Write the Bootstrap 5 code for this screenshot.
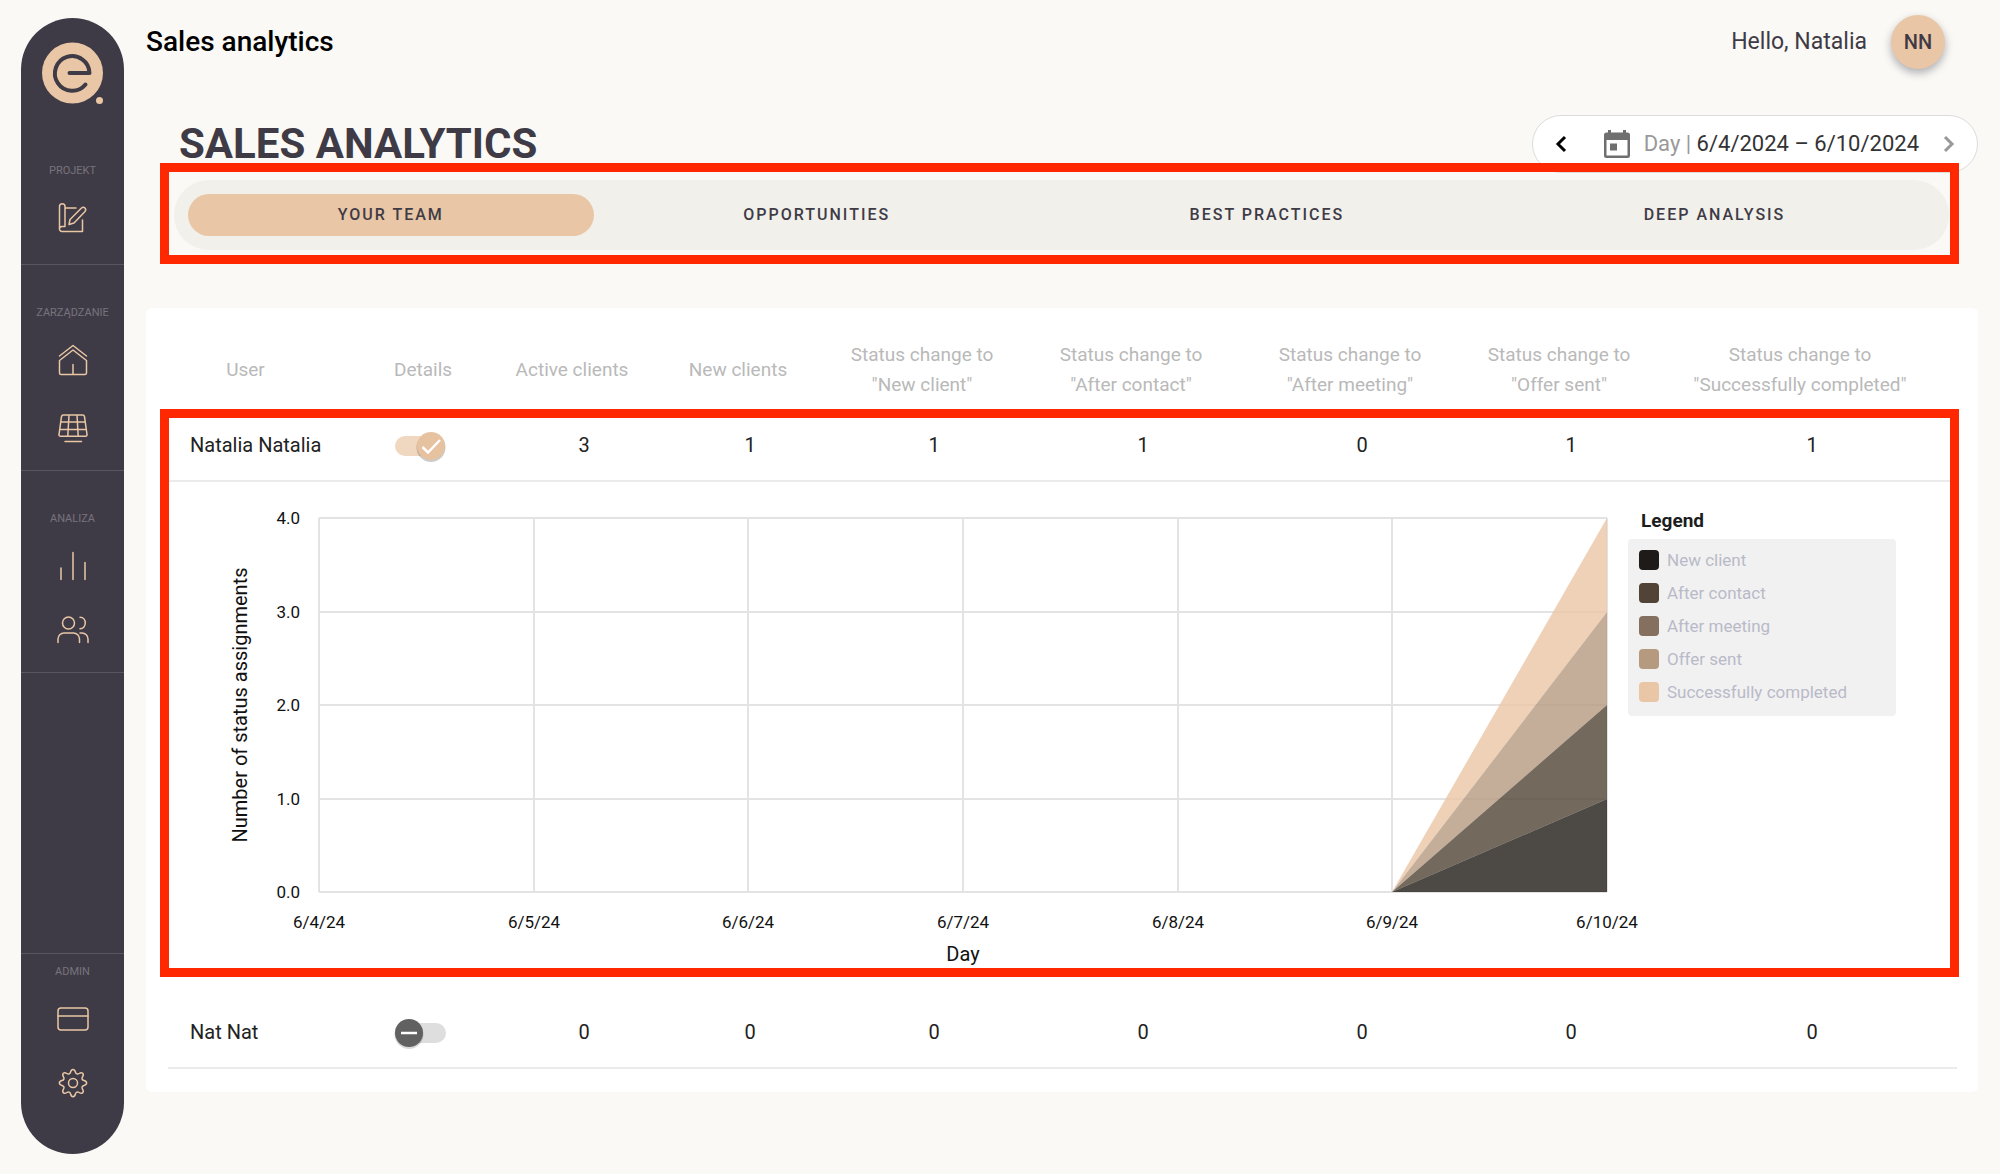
<!DOCTYPE html>
<html lang="en">
<head>
<meta charset="utf-8">
<meta name="viewport" content="width=device-width, initial-scale=1">
<title>Sales analytics</title>
<link href="https://cdn.jsdelivr.net/npm/bootstrap@5.3.0/dist/css/bootstrap.min.css" rel="stylesheet">
<style>
  :root { --ink: #3f3b46; --sand: #e9c6a5; --paper: #faf9f5; --line: #e4e4e4; --alert: #ff2800; }
  body { font-family: Roboto, "Noto Sans", sans-serif; background: var(--paper); color: #222; font-size: 19px; line-height: 30px; }

  .side-rail { width: 103px; margin: 18px 0 20px 21px; background: var(--ink); border-radius: 52px; padding-top: 22px; overflow: hidden; }
  .side-logo { margin-bottom: 53px; }
  .rail-group { padding-bottom: 24px; border-bottom: 1px solid #5a5661; }
  .side-logo + .rail-group { padding-bottom: 28px; }
  .rail-group + .rail-group { padding-top: 40px; }
  .rail-group.rail-admin { margin-top: auto; padding: 10px 0 53px; border-top: 1px solid #5a5661; border-bottom: 0; }
  .rail-label { font-size: 11px; line-height: 16px; color: #77737d; margin-bottom: 21px; }
  .rail-link { height: 36px; color: var(--sand); }
  .rail-link + .rail-link { margin-top: 28px; }
  .rail-manage .rail-link + .rail-link { margin-top: 32px; }
  .rail-link svg { fill: none; stroke: currentColor; stroke-width: 1.5; stroke-linecap: round; stroke-linejoin: round; }

  .page-main { padding: 15px 22px 0; min-width: 0; }
  .top-title { font-size: 28px; line-height: 54px; font-weight: 500; color: #000; }
  .top-bar { margin-bottom: 46px; padding-right: 33px; }
  .hello-text { font-size: 23px; color: var(--ink); }
  .avatar-btn { width: 54px; height: 54px; background: var(--sand); color: var(--ink); font-size: 20px; font-weight: 500; box-shadow: 0 4px 8px rgba(60,60,80,.4); }

  .page-title { font-size: 42px; line-height: 58px; font-weight: 700; color: var(--ink); padding-left: 33px; }
  .date-pill { height: 58px; background: #fff; border: 1px solid #dcdcdc; font-size: 22px; color: #333; padding: 0 18px; }
  .date-pill .range-kind { color: #999; }
  .date-pill .btn { width: 20px; }
  .date-pill .btn:last-child { margin-left: 20px; }
  .cal-icon { margin: 0 14px 0 33px; }

  .marked { position: relative; }
  .marked::after { content: ""; position: absolute; border: 9px solid var(--alert); pointer-events: none; z-index: 2; }
  .marked-tabs { margin: 7px 29px 58px 28px; }
  .marked-tabs::after { inset: -17px -10px -14px -14px; }
  .marked-table::after { top: 78px; bottom: 92px; left: -8px; right: -2px; }

  .team-tabs { background: #f1f0eb; border-radius: 35px; padding: 14px; }
  .team-tabs .nav-link { height: 42px; border-radius: 21px; padding: 0; font-size: 16px; line-height: 42px; font-weight: 500; letter-spacing: 2px; color: var(--ink); white-space: nowrap; }
  .team-tabs .nav-link.active { background: var(--sand); color: var(--ink); }

  .data-card { background: #fff; border-radius: 6px; padding: 23px 21px 23px 22px; }
  .team-table { table-layout: fixed; width: 100%; text-align: center; }
  .team-table thead th { height: 78px; font-weight: 400; color: #b9b9b9; padding: 0 24px 0 0; white-space: nowrap; vertical-align: middle; line-height: 30px; }
  .team-table thead th.plain-head { padding: 0; }
  .team-table tbody td { padding: 0; }
  .team-table .user-row td { height: 72px; border-bottom: 2px solid #ebebeb; vertical-align: middle; font-size: 20px; }
  .team-table .user-row td.user-name { text-align: left; padding-left: 22px; white-space: nowrap; }
  .c-user { width: 179px; } .c-det { width: 152px; } .c-act { width: 170px; } .c-new { width: 162px; }
  .c-s1 { width: 206px; } .c-s2 { width: 212px; } .c-s3 { width: 226px; } .c-s4 { width: 192px; } .c-s5 { width: 290px; }

  .detail-switch { appearance: none; display: block; width: 56px; height: 34px; margin: 2px auto 0 45px; background: no-repeat center/56px 34px; cursor: pointer;
    background-image: url("data:image/svg+xml,%3Csvg xmlns='http://www.w3.org/2000/svg' viewBox='0 0 56 34'%3E%3Crect x='4' y='7' width='50' height='20' rx='10' fill='%23dedede'/%3E%3Ccircle cx='17' cy='18.500' r='14.500' fill='%23000' opacity='.15'/%3E%3Ccircle cx='17' cy='17' r='14' fill='%23616161'/%3E%3Cpath d='M9 17h16' stroke='%23fff' stroke-width='2.500'/%3E%3C/svg%3E"); }
  .detail-switch:checked {
    background-image: url("data:image/svg+xml,%3Csvg xmlns='http://www.w3.org/2000/svg' viewBox='0 0 56 34'%3E%3Crect x='3' y='7' width='50' height='20' rx='10' fill='%23f0d7bf'/%3E%3Ccircle cx='39' cy='18.500' r='14.500' fill='%23000' opacity='.2'/%3E%3Ccircle cx='39' cy='17' r='14' fill='%23e6c2a0'/%3E%3Cpath d='M30.500 18l5.500 5.500L48 11' fill='none' stroke='%23fff' stroke-width='2.500'/%3E%3C/svg%3E"); }

  .chart-wrap { height: 514px; padding-right: 61px; }
  .chart-svg { min-width: 0; overflow: visible; }
  .chart-svg text { fill: #111; font-size: 17px; }
  .chart-svg .axis-name { font-size: 20px; }
  .grid-lines { stroke: #e3e3e3; stroke-width: 2; fill: none; }
  .legend-col { width: 268px; padding-top: 24px; text-align: left; }
  .legend-title { font-size: 19px; font-weight: 700; line-height: 30px; padding-left: 13px; margin-bottom: 3px; color: #1d1d1d; }
  .legend-list { background: #f1f1f1; border-radius: 4px; padding: 4px 11px 8px; }
  .legend-list li { height: 33px; gap: 8px; font-size: 17px; color: #b9bac8; }
  .key-box { width: 20px; height: 20px; border-radius: 4px; }
  .k1 { background: #1e1b18; } .k2 { background: #514335; } .k3 { background: #857060; } .k4 { background: #b59a80; } .k5 { background: #e9c6a5; }
</style>
</head>
<body>
<div class="d-flex min-vh-100">
  <nav class="side-rail d-flex flex-column flex-shrink-0 text-center" aria-label="Main">
    <a href="#" class="side-logo d-block" aria-label="Home">
      <svg class="d-block mx-auto" width="70" height="70" viewBox="0 0 70 70">
        <circle cx="34.500" cy="33" r="30.500" fill="#e9c6a5"/><circle cx="61.500" cy="60.500" r="3.500" fill="#e9c6a5"/>
        <path d="M31.500 33H51.500A17.300 17.300 0 1 0 47.500 44.500" fill="none" stroke="#3f3b46" stroke-width="4" stroke-linecap="round" stroke-linejoin="round"/>
      </svg>
    </a>
    <div class="rail-group">
      <div class="rail-label">PROJEKT</div>
      <a href="#" class="rail-link d-flex align-items-center justify-content-center" aria-label="Project">
        <svg width="32" height="32" viewBox="0 0 32 32"><path d="M8 24.500V4.500a2.750 2.750 0 0 0-5.500 0v22A2.500 2.500 0 0 0 5 29.500h20.500V18M8 24.500H5a2.500 2.500 0 0 0-2.500 2.500M8 6H19M12 22.500l1-5L24.500 6c2.500-2 5.500 1 3.500 3.500L17 21z"/></svg>
      </a>
    </div>
    <div class="rail-group rail-manage">
      <div class="rail-label">ZARZĄDZANIE</div>
      <a href="#" class="rail-link d-flex align-items-center justify-content-center" aria-label="House">
        <svg width="32" height="34" viewBox="0 0 32 34"><path d="M2.500 13 16 2.500 29.500 13M2.500 17.500 16 7l13.500 10.500V30a1.500 1.500 0 0 1-1.500 1.500H4A1.500 1.500 0 0 1 2.500 30zM16 21.500v10"/></svg>
      </a>
      <a href="#" class="rail-link d-flex align-items-center justify-content-center" aria-label="Solar panels">
        <svg width="32" height="32" viewBox="0 0 32 32"><path d="M6.500 3h19a2 2 0 0 1 2 1.700L30 22.500a1.500 1.500 0 0 1-1.500 1.800h-25A1.500 1.500 0 0 1 2 22.500L4.500 4.700a2 2 0 0 1 2-1.700zM4 10h24M3 17.500h26M12 3l-1.200 21M20 3l1.200 21M8 29.500h16.500"/></svg>
      </a>
    </div>
    <div class="rail-group">
      <div class="rail-label">ANALIZA</div>
      <a href="#" class="rail-link d-flex align-items-center justify-content-center" aria-label="Statistics">
        <svg width="32" height="32" viewBox="0 0 32 32"><path d="M4 18v11.500M16 2.500v27M28 12.500v17"/></svg>
      </a>
      <a href="#" class="rail-link d-flex align-items-center justify-content-center" aria-label="Users">
        <svg width="34" height="32" viewBox="0 0 34 32"><circle cx="12.500" cy="9" r="6"/><path d="M24 3.200c7 0 7 11.500 0 11.500M2 28.500v-3.500a6 6 0 0 1 6-6h9.500a6 6 0 0 1 6 6v3.500M24 19h2a6 6 0 0 1 6 6v3.500"/></svg>
      </a>
    </div>
    <div class="rail-group rail-admin">
      <div class="rail-label">ADMIN</div>
      <a href="#" class="rail-link d-flex align-items-center justify-content-center" aria-label="Billing">
        <svg width="34" height="26" viewBox="0 0 34 26"><rect x="2" y="2" width="30" height="22" rx="3"/><path d="M2 10h30"/></svg>
      </a>
      <a href="#" class="rail-link d-flex align-items-center justify-content-center" aria-label="Settings">
        <svg width="32" height="32" viewBox="0 0 32 32"><circle cx="16" cy="16" r="4.500"/><path d="M13.600 5C14.500 1.500 17.500 1.500 18.400 5c.5 2 2.200 2.500 3.700 1.500 3-2 5.400.4 3.400 3.400-1 1.500-.5 3.200 1.500 3.700 3.500.9 3.500 3.900 0 4.800-2 .5-2.500 2.200-1.500 3.700 2 3-.4 5.400-3.400 3.400-1.500-1-3.200-.5-3.700 1.500-.9 3.500-3.900 3.500-4.800 0-.5-2-2.200-2.500-3.700-1.500-3 2-5.400-.4-3.400-3.400 1-1.500.5-3.200-1.500-3.700-3.500-.9-3.500-3.900 0-4.800 2-.5 2.500-2.200 1.500-3.700-2-3 .4-5.400 3.400-3.400 1.500 1 3.200.5 3.700-1.500z"/></svg>
      </a>
    </div>
  </nav>

  <main class="page-main flex-grow-1">
    <header class="top-bar d-flex align-items-center justify-content-between">
      <div class="top-title">Sales analytics</div>
      <div class="d-flex align-items-center gap-4">
        <span class="hello-text">Hello, Natalia</span>
        <button type="button" class="avatar-btn btn rounded-circle p-0 border-0">NN</button>
      </div>
    </header>

    <div class="d-flex align-items-center justify-content-between">
      <h1 class="page-title mb-0">SALES ANALYTICS</h1>
      <div class="date-pill d-flex align-items-center rounded-pill">
        <button type="button" class="btn p-0 border-0 d-flex justify-content-center" aria-label="Previous period">
          <svg width="14" height="20" viewBox="0 0 14 20"><path d="M11 3 4 10l7 7" fill="none" stroke="#000" stroke-width="3"/></svg>
        </button>
        <svg class="cal-icon" width="26" height="30" viewBox="0 0 26 30" fill="#6f6f6f"><path fill-rule="evenodd" d="M4 1h3v2.500h12V1h3v2.500h1.500A2.500 2.500 0 0 1 26 6v20.500a2.500 2.500 0 0 1-2.500 2.500h-21A2.500 2.500 0 0 1 0 26.500V6a2.500 2.500 0 0 1 2.500-2.500H4zM2.500 11v15.500h21V11z"/><path d="M6 14.500h7v7H6z"/></svg>
        <span class="text-nowrap"><span class="range-kind">Day |</span> 6/4/2024 – 6/10/2024</span>
        <button type="button" class="btn p-0 border-0 d-flex justify-content-center" aria-label="Next period">
          <svg width="14" height="20" viewBox="0 0 14 20"><path d="m3 3 7 7-7 7" fill="none" stroke="#999" stroke-width="3"/></svg>
        </button>
      </div>
    </div>

    <div class="marked marked-tabs">
      <div class="team-tabs nav nav-pills nav-fill flex-nowrap" role="tablist">
        <button type="button" class="nav-link active flex-fill" role="tab" aria-selected="true">YOUR TEAM</button>
        <button type="button" class="nav-link flex-fill" role="tab" aria-selected="false">OPPORTUNITIES</button>
        <button type="button" class="nav-link flex-fill" role="tab" aria-selected="false">BEST PRACTICES</button>
        <button type="button" class="nav-link flex-fill" role="tab" aria-selected="false">DEEP ANALYSIS</button>
      </div>
    </div>

    <section class="data-card">
      <div class="marked marked-table">
        <table class="team-table">
          <colgroup><col class="c-user"><col class="c-det"><col class="c-act"><col class="c-new"><col class="c-s1"><col class="c-s2"><col class="c-s3"><col class="c-s4"><col class="c-s5"></colgroup>
          <thead>
            <tr>
              <th scope="col">User</th>
              <th scope="col" class="plain-head">Details</th>
              <th scope="col">Active clients</th>
              <th scope="col">New clients</th>
              <th scope="col">Status change to<br>"New client"</th>
              <th scope="col">Status change to<br>"After contact"</th>
              <th scope="col">Status change to<br>"After meeting"</th>
              <th scope="col">Status change to<br>"Offer sent"</th>
              <th scope="col">Status change to<br>"Successfully completed"</th>
            </tr>
          </thead>
          <tbody>
            <tr class="user-row">
              <td class="user-name">Natalia Natalia</td>
              <td><input type="checkbox" role="switch" class="detail-switch" aria-label="Details for Natalia Natalia" checked></td>
              <td>3</td><td>1</td><td>1</td><td>1</td><td>0</td><td>1</td><td>1</td>
            </tr>
            <tr>
              <td colspan="9">
                <div class="chart-wrap d-flex">
                  <svg class="chart-svg flex-grow-1" viewBox="0 0 1460 514" role="img" aria-label="Number of status assignments by day">
                    <g class="grid-lines">
                      <path d="M151 36H1439M151 130H1439M151 223H1439M151 317H1439M151 410H1439"/>
                      <path d="M151 36V410M366 36V410M580 36V410M795 36V410M1010 36V410M1224 36V410M1439 36V410"/>
                    </g>
                    <g fill-opacity=".8">
                      <path fill="#eac6a5" d="M1224 410 1439 36V130z"/>
                      <path fill="#b59a80" d="M1224 410 1439 130V223z"/>
                      <path fill="#514335" d="M1224 410 1439 223V317z"/>
                      <path fill="#211c15" d="M1224 410 1439 317V410z"/>
                    </g>
                    <g text-anchor="end">
                      <text x="132" y="42">4.0</text><text x="132" y="136">3.0</text><text x="132" y="229">2.0</text><text x="132" y="323">1.0</text><text x="132" y="416">0.0</text>
                    </g>
                    <g text-anchor="middle">
                      <text x="151" y="446">6/4/24</text><text x="366" y="446">6/5/24</text><text x="580" y="446">6/6/24</text><text x="795" y="446">6/7/24</text><text x="1010" y="446">6/8/24</text><text x="1224" y="446">6/9/24</text><text x="1439" y="446">6/10/24</text>
                      <text class="axis-name" x="795" y="479">Day</text>
                      <text class="axis-name" transform="translate(79 223) rotate(-90)">Number of status assignments</text>
                    </g>
                  </svg>
                  <div class="legend-col flex-shrink-0">
                    <div class="legend-title">Legend</div>
                    <ul class="legend-list list-unstyled mb-0">
                      <li class="d-flex align-items-center"><span class="key-box k1"></span>New client</li>
                      <li class="d-flex align-items-center"><span class="key-box k2"></span>After contact</li>
                      <li class="d-flex align-items-center"><span class="key-box k3"></span>After meeting</li>
                      <li class="d-flex align-items-center"><span class="key-box k4"></span>Offer sent</li>
                      <li class="d-flex align-items-center"><span class="key-box k5"></span>Successfully completed</li>
                    </ul>
                  </div>
                </div>
              </td>
            </tr>
            <tr class="user-row">
              <td class="user-name">Nat Nat</td>
              <td><input type="checkbox" role="switch" class="detail-switch" aria-label="Details for Nat Nat"></td>
              <td>0</td><td>0</td><td>0</td><td>0</td><td>0</td><td>0</td><td>0</td>
            </tr>
          </tbody>
        </table>
      </div>
    </section>
  </main>
</div>
<script src="https://cdn.jsdelivr.net/npm/bootstrap@5.3.0/dist/js/bootstrap.bundle.min.js"></script>
</body>
</html>
